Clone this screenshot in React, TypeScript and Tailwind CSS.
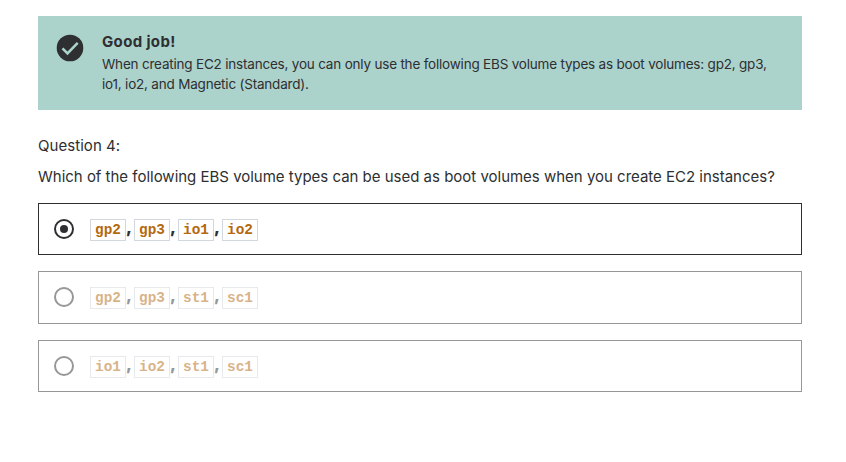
import React from 'react';

type OptionProps = { codes: string[]; selected?: boolean; className: string };

function Option({ codes, selected = false, className }: OptionProps) {
  return (
    <label className={`flex items-start border pl-[15px] pt-[15px] ${selected ? 'border-[#2d2f31]' : 'border-[#969798]'} ${className}`}>
      <span className={`flex size-5 shrink-0 items-center justify-center rounded-full border-2 ${selected ? 'border-[#2d2f31]' : 'border-[#969798]'}`}>
        {selected && <span className="size-2 rounded-full bg-[#2d2f31]" />}
      </span>
      <span className={`ml-4 flex items-start font-bold ${selected ? '' : 'opacity-50'}`}>
        {codes.map((code, i) => (
          <React.Fragment key={code}>
            <code className="flex h-[22px] w-9 items-center justify-center border border-[#d1d7dc] pt-0.5 font-['Liberation_Mono',monospace] text-[14.4px] text-[#b4690e]">{code}</code>
            {i < codes.length - 1 && <span className="-mt-0.5 w-2 text-[17px] font-extrabold leading-5">,</span>}
          </React.Fragment>
        ))}
      </span>
    </label>
  );
}

export default function App() {
  return (
    <main className="h-[462px] bg-white pl-[38px] pt-4 font-['Inter',sans-serif] text-[#2d2f31]">
      <div className="w-[764px]">
        <section className="flex h-[94px] bg-[#acd2cc] pl-[18px] pt-4">
          <svg viewBox="0 0 28 28" className="mt-0.5 size-7 shrink-0">
            <circle cx="14" cy="14" r="13.3" fill="#2d2f31" />
            <path d="M6.5 14.3l5 5 10.2-10.4" fill="none" stroke="#acd2cc" strokeWidth="2.6" />
          </svg>
          <div className="ml-[18px]">
            <h2 className="text-[15px] font-bold leading-5 tracking-[0.35px]">Good job!</h2>
            <p className="mt-0.5 whitespace-nowrap text-[13.5px] leading-5 tracking-[-0.2px]">
              When creating EC2 instances, you can only use the following EBS volume types as boot volumes: gp2, gp3,<br />io1, io2, and Magnetic (Standard).
            </p>
          </div>
        </section>
        <p className="mt-6 text-[15px] leading-6 tracking-[0.05px]">Question 4:</p>
        <p className="mt-[7px] whitespace-nowrap text-[15px] leading-6 tracking-[-0.01px]">Which of the following EBS volume types can be used as boot volumes when you create EC2 instances?</p>
        <Option className="mt-[14px] h-[52px]" codes={['gp2', 'gp3', 'io1', 'io2']} selected />
        <Option className="mt-4 h-[53px]" codes={['gp2', 'gp3', 'st1', 'sc1']} />
        <Option className="mt-4 h-[52px]" codes={['io1', 'io2', 'st1', 'sc1']} />
      </div>
    </main>
  );
}
